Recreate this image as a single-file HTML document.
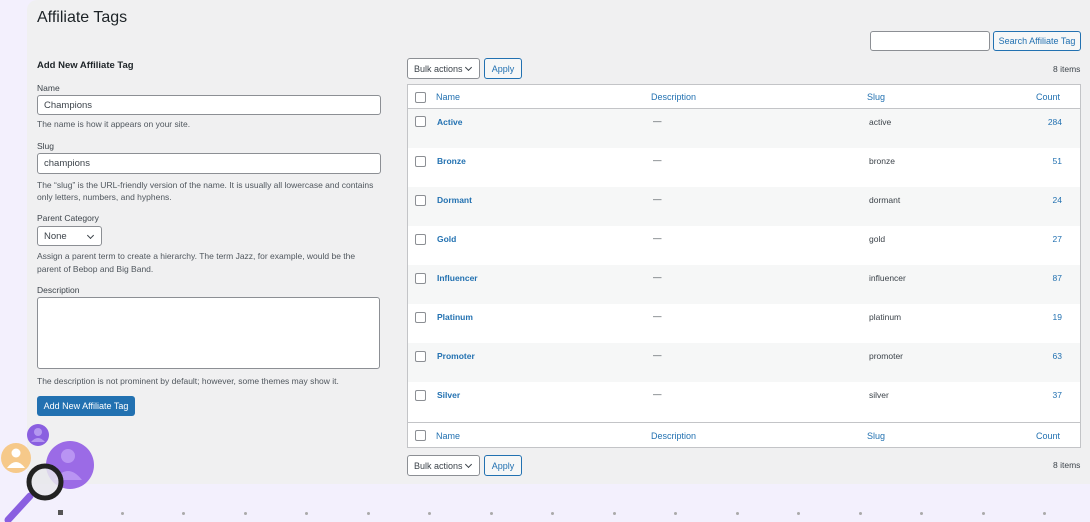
<!DOCTYPE html>
<html><head><style>
*{margin:0;padding:0;box-sizing:border-box}
body{width:1090px;height:522px;overflow:hidden;background:#f3f0fd;font-family:"Liberation Sans",sans-serif;color:#3c434a;position:relative}
.main{position:absolute;left:27px;top:0;width:1063px;height:484px;background:#f0f0f1;border-radius:10px 0 0 0}
.a{position:absolute;white-space:nowrap}
.s{font-size:8.5px}
.in{position:absolute;background:#fff;border:1px solid #8c8f94;border-radius:3px;font-size:9.5px;padding-left:6px;display:flex;align-items:center}
.btn{position:absolute;border:1px solid #2271b1;border-radius:3px;color:#2271b1;background:#f6f7f7;font-size:9px;display:flex;align-items:center;justify-content:center}
.sel{position:absolute;background:#fff;border:1px solid #8c8f94;border-radius:3px;font-size:9.5px;padding-left:6px;display:flex;align-items:center}
.sel:after{content:"";position:absolute;right:8px;top:6px;width:4px;height:4px;border-right:1px solid #3c434a;border-bottom:1px solid #3c434a;transform:rotate(45deg)}
.tbl{position:absolute;left:407px;top:84px;width:674px;height:364px;background:#fff;border:1px solid #c3c4c7}
.row{position:absolute;left:0;width:672px;height:39px}
.cb{position:absolute;left:7px;width:11px;height:11px;border:1px solid #8c8f94;border-radius:2px;background:#fff}
.lk{color:#2271b1}
.dot{position:absolute;top:512px;width:3px;height:3px;border-radius:50%;background:#aaa}
</style></head><body>
<div class="main"></div>
<div class="a" style="left:37px;top:9px;font-size:16px;color:#1d2327">Affiliate Tags</div>
<div class="a" style="left:37px;top:60px;font-size:9.5px;font-weight:bold;color:#1d2327">Add New Affiliate Tag</div>
<div class="a s" style="left:37px;top:83px">Name</div>
<div class="in" style="left:37px;top:95px;width:344px;height:20px">Champions</div>
<div class="a s" style="left:37px;top:119px;color:#50575e">The name is how it appears on your site.</div>
<div class="a s" style="left:37px;top:141px">Slug</div>
<div class="in" style="left:37px;top:153px;width:344px;height:21px">champions</div>
<div class="a s" style="left:37px;top:179px;line-height:12px;color:#50575e">The “slug” is the URL-friendly version of the name. It is usually all lowercase and contains<br>only letters, numbers, and hyphens.</div>
<div class="a s" style="left:37px;top:213px">Parent Category</div>
<div class="sel" style="left:37px;top:226px;width:65px;height:20px">None</div>
<div class="a s" style="left:37px;top:250px;line-height:13px;color:#50575e">Assign a parent term to create a hierarchy. The term Jazz, for example, would be the<br>parent of Bebop and Big Band.</div>
<div class="a s" style="left:37px;top:285px">Description</div>
<div class="in" style="left:37px;top:297px;width:343px;height:72px"></div>
<div class="a s" style="left:37px;top:376px;color:#50575e">The description is not prominent by default; however, some themes may show it.</div>
<div class="a" style="left:37px;top:396px;width:98px;height:20px;background:#2271b1;border-radius:3px;color:#fff;font-size:9px;display:flex;align-items:center;justify-content:center">Add New Affiliate Tag</div>

<div class="in" style="left:870px;top:31px;width:120px;height:20px"></div>
<div class="btn" style="left:993px;top:31px;width:88px;height:20px">Search Affiliate Tag</div>
<div class="sel" style="left:407px;top:58px;width:73px;height:21px;font-size:9px">Bulk actions</div>
<div class="btn" style="left:484px;top:58px;width:38px;height:21px">Apply</div>
<div class="a s" style="left:1053px;top:64px">8 items</div>

<div class="tbl">
<div class="row" style="top:0;height:24px;border-bottom:1px solid #c3c4c7;font-size:9px">
<div class="cb" style="top:7px"></div><span class="a lk" style="left:28px;top:7px">Name</span><span class="a lk" style="left:243px;top:7px">Description</span><span class="a lk" style="left:459px;top:7px">Slug</span><span class="a lk" style="left:628px;top:7px">Count</span></div>
<div class="row" style="top:24px;background:#f6f7f7"><div class="cb" style="top:7px"></div><b class="a lk s" style="left:29px;top:8px">Active</b><span class="a s" style="left:245px;top:7px">—</span><span class="a s" style="left:461px;top:8px">active</span><span class="a s lk" style="left:637px;top:8px;width:17px;text-align:right">284</span></div>
<div class="row" style="top:63px"><div class="cb" style="top:8px"></div><b class="a lk s" style="left:29px;top:8px">Bronze</b><span class="a s" style="left:245px;top:7px">—</span><span class="a s" style="left:461px;top:8px">bronze</span><span class="a s lk" style="left:637px;top:8px;width:17px;text-align:right">51</span></div>
<div class="row" style="top:102px;background:#f6f7f7"><div class="cb" style="top:8px"></div><b class="a lk s" style="left:29px;top:8px">Dormant</b><span class="a s" style="left:245px;top:7px">—</span><span class="a s" style="left:461px;top:8px">dormant</span><span class="a s lk" style="left:637px;top:8px;width:17px;text-align:right">24</span></div>
<div class="row" style="top:141px"><div class="cb" style="top:8px"></div><b class="a lk s" style="left:29px;top:8px">Gold</b><span class="a s" style="left:245px;top:7px">—</span><span class="a s" style="left:461px;top:8px">gold</span><span class="a s lk" style="left:637px;top:8px;width:17px;text-align:right">27</span></div>
<div class="row" style="top:180px;background:#f6f7f7"><div class="cb" style="top:8px"></div><b class="a lk s" style="left:29px;top:8px">Influencer</b><span class="a s" style="left:245px;top:7px">—</span><span class="a s" style="left:461px;top:8px">influencer</span><span class="a s lk" style="left:637px;top:8px;width:17px;text-align:right">87</span></div>
<div class="row" style="top:219px"><div class="cb" style="top:8px"></div><b class="a lk s" style="left:29px;top:8px">Platinum</b><span class="a s" style="left:245px;top:7px">—</span><span class="a s" style="left:461px;top:8px">platinum</span><span class="a s lk" style="left:637px;top:8px;width:17px;text-align:right">19</span></div>
<div class="row" style="top:258px;background:#f6f7f7"><div class="cb" style="top:8px"></div><b class="a lk s" style="left:29px;top:8px">Promoter</b><span class="a s" style="left:245px;top:7px">—</span><span class="a s" style="left:461px;top:8px">promoter</span><span class="a s lk" style="left:637px;top:8px;width:17px;text-align:right">63</span></div>
<div class="row" style="top:297px"><div class="cb" style="top:8px"></div><b class="a lk s" style="left:29px;top:8px">Silver</b><span class="a s" style="left:245px;top:7px">—</span><span class="a s" style="left:461px;top:8px">silver</span><span class="a s lk" style="left:637px;top:8px;width:17px;text-align:right">37</span></div>
<div class="row" style="top:337px;height:26px;border-top:1px solid #c3c4c7;font-size:9px"><div class="cb" style="top:7px"></div><span class="a lk" style="left:28px;top:8px">Name</span><span class="a lk" style="left:243px;top:8px">Description</span><span class="a lk" style="left:459px;top:8px">Slug</span><span class="a lk" style="left:628px;top:8px">Count</span></div>
</div>
<div class="sel" style="left:407px;top:455px;width:73px;height:21px;font-size:9px">Bulk actions</div>
<div class="btn" style="left:484px;top:455px;width:38px;height:21px">Apply</div>
<div class="a s" style="left:1053px;top:460px">8 items</div>

<svg style="position:absolute;left:0;top:420px" width="100" height="102">
<circle cx="38" cy="15" r="11" fill="#8a5fe0"/><circle cx="38" cy="12" r="4" fill="#b497f0"/><path d="M31 22 q7-8 14 0z" fill="#b497f0"/>
<circle cx="16" cy="38" r="15" fill="#f6c98a"/><circle cx="16" cy="33" r="4.5" fill="#fff"/><path d="M7 48 q9-12 18 0z" fill="#fff"/>
<circle cx="70" cy="45" r="24" fill="#9b6be6"/><circle cx="68" cy="36" r="7" fill="#b994f3"/><path d="M54 60 q14-18 28 0z" fill="#b994f3"/>
<line x1="30" y1="76" x2="8" y2="100" stroke="#8a5fe0" stroke-width="7" stroke-linecap="round"/>
<circle cx="45" cy="62" r="16" fill="#e8e8ec" fill-opacity="0.85" stroke="#222" stroke-width="5"/>
</svg>
<div class="a" style="left:58px;top:510px;width:5px;height:5px;background:#555"></div>
<div class="dot" style="left:121px"></div><div class="dot" style="left:182px"></div><div class="dot" style="left:244px"></div><div class="dot" style="left:305px"></div><div class="dot" style="left:367px"></div><div class="dot" style="left:428px"></div><div class="dot" style="left:490px"></div><div class="dot" style="left:551px"></div><div class="dot" style="left:613px"></div><div class="dot" style="left:674px"></div><div class="dot" style="left:736px"></div><div class="dot" style="left:797px"></div><div class="dot" style="left:859px"></div><div class="dot" style="left:920px"></div><div class="dot" style="left:982px"></div><div class="dot" style="left:1043px"></div>
</body></html>
